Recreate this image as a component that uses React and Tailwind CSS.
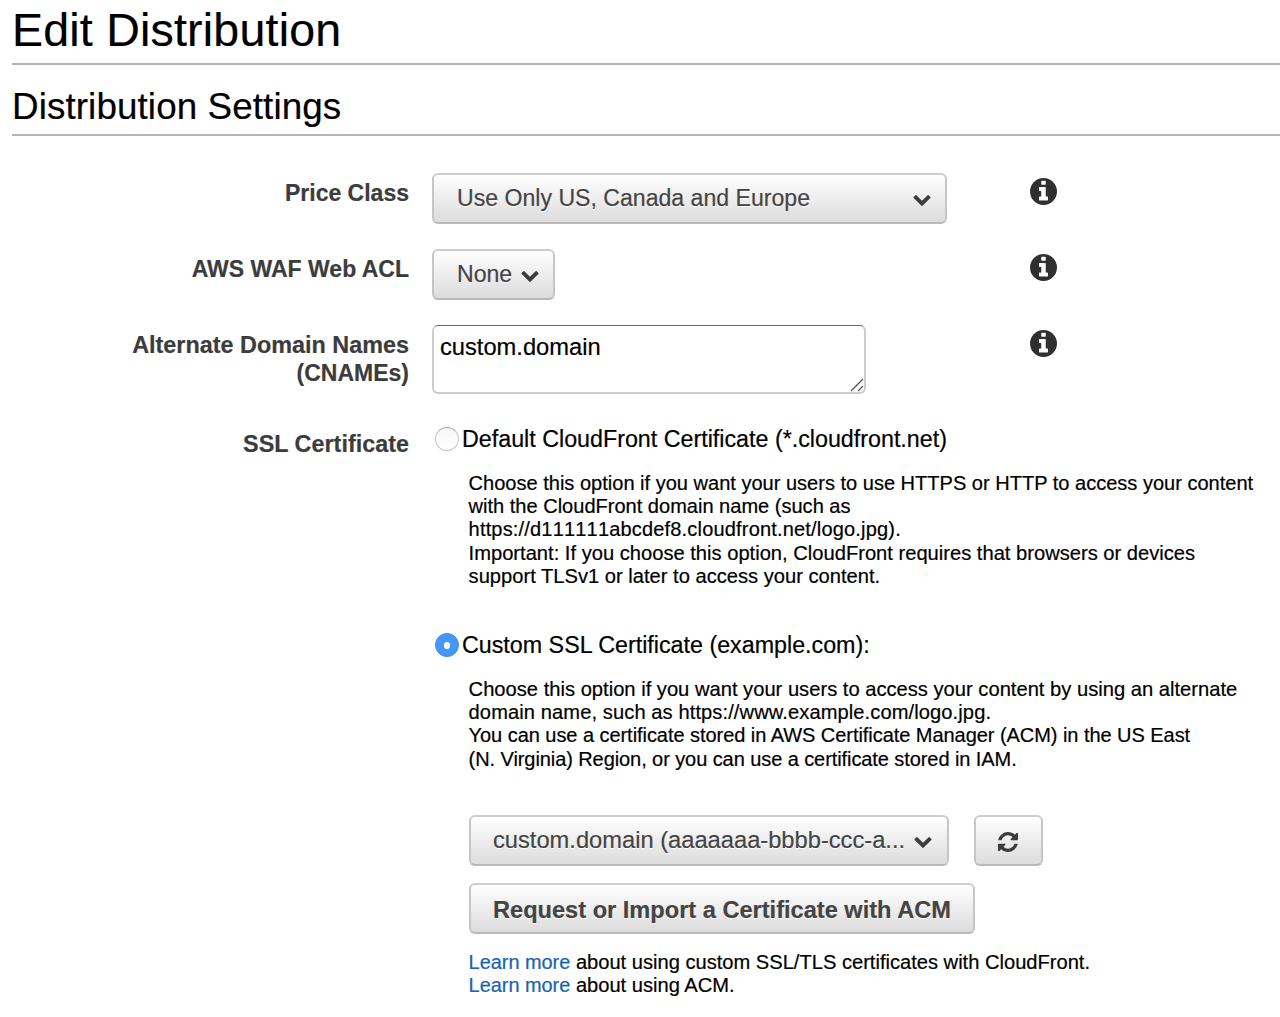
function Chevron({ className }) {
  return (
    <svg viewBox="90 533 1612 1035" className={`h-[11px] w-[18px] shrink-0 ${className}`} fill="#3c3c3c">
      <path d="M1683 808l-742 741q-19 19-45 19t-45-19L109 808q-19-19-19-45.5t19-45.5l166-165q19-19 45-19t45 19l531 531 531-531q19-19 45-19t45 19l166 165q19 19 19 45.5t-19 45.5z" />
    </svg>
  );
}

function Info() {
  return (
    <svg viewBox="128 128 1536 1536" className="mt-[5.5px] ml-auto mr-[223px] h-[27px] w-[27px] shrink-0" fill="#303030">
      <path fillRule="evenodd" d="M896 128a768 768 0 1 1 0 1536a768 768 0 1 1 0-1536zM1152 1376v-160q0-14-9-23t-23-9h-96V672q0-14-9-23t-23-9H672q-14 0-23 9t-9 23v160q0 14 9 23t23 9h96v320h-96q-14 0-23 9t-9 23v160q0 14 9 23t23 9h448q14 0 23-9t9-23zM1024 480V320q0-14-9-23t-23-9H800q-14 0-23 9t-9 23v160q0 14 9 23t23 9h192q14 0 23-9t9-23z" />
    </svg>
  );
}

function Refresh() {
  return (
    <svg viewBox="128 128 1536 1536" className="mt-[4px] mr-[2px] h-[20px] w-[20px]" fill="#3c3c3c">
      <path d="M1639 1056q0 5-1 7-64 268-268 434.5T892 1664q-146 0-282.5-55T366 1452l-129 129q-19 19-45 19t-45-19-19-45v-448q0-26 19-45t45-19h448q26 0 45 19t19 45-19 45l-137 137q71 66 161 102t187 36q134 0 250-65t186-179q11-17 53-117 8-23 30-23h192q13 0 22.5 9.5t9.5 22.5zm25-800v448q0 26-19 45t-45 19h-448q-26 0-45-19t-19-45 19-45l138-138Q1097 384 896 384q-134 0-250 65T460 628q-11 17-53 117-8 23-30 23H178q-13 0-22.5-9.5T146 736v-7q65-268 270-434.5T896 128q146 0 284 55.5T1425 340l130-129q19-19 45-19t45 19 19 45z" />
    </svg>
  );
}

function Button({ className, children }) {
  return (
    <button
      type="button"
      className={`flex h-[51px] items-center rounded-[6px] border-2 border-t-[#cdcdcd] border-x-[#c6c6c6] border-b-[#b9b9b9] bg-linear-to-b from-white to-[#dcdcdc] leading-[28px] whitespace-nowrap text-[#444] [text-shadow:0_1px_0_#fff] ${className}`}
    >
      {children}
    </button>
  );
}

function Row({ className, label, children }) {
  return (
    <div className={`flex items-start ${className}`}>
      <div className="mr-[23px] w-[409px] shrink-0 pt-[7px] text-right text-[23px] leading-[28px] font-bold whitespace-nowrap text-[#3c3c3c]">
        {label}
      </div>
      {children}
    </div>
  );
}

function Radio({ checked, children }) {
  return (
    <label className="flex h-[28px] items-center">
      <span
        className={
          checked
            ? "ml-[3px] flex h-6 w-6 items-center justify-center rounded-full border border-[#3b8df0] bg-[#4598f7]"
            : "ml-[3px] h-6 w-6 rounded-full border border-[#c6c6c6] border-t-[#a8a8a8] bg-linear-to-b from-[#f6f6f6] to-white"
        }
      >
        {checked && <span className="h-[7px] w-[6px] rounded-full bg-white" />}
      </span>
      <span className="ml-[3px] text-[23.27px] leading-[28px] whitespace-nowrap">{children}</span>
    </label>
  );
}

export default function App() {
  return (
    <div className="h-[1017px] w-[1280px] overflow-hidden bg-white font-['Liberation_Sans',Arial,sans-serif] text-black [-webkit-text-stroke-width:0.2px]">
      <h1 className="ml-3 h-[65px] border-b-2 border-[#b4b4b4] pt-[4px] text-[46.5px] leading-[52px] tracking-[0.22px]">
        Edit Distribution
      </h1>
      <h2 className="ml-3 h-[71px] border-b-2 border-[#b4b4b4] pt-[22px] text-[36.8px] leading-[40px] tracking-[0.1px]">
        Distribution Settings
      </h2>

      <Row className="mt-[36px] h-[76px]" label="Price Class">
        <Button className="mt-px w-[515px] pr-[14px] pl-[23px] text-[23.1px]">
          <span className="-mt-[2px]">Use Only US, Canada and Europe</span>
          <Chevron className="mt-[4px] ml-auto" />
        </Button>
        <Info />
      </Row>
      <Row className="h-[76px]" label="AWS WAF Web ACL">
        <Button className="mt-px w-[123px] pl-[23px] text-[23.1px]">
          <span className="-mt-[2px]">None</span>
          <Chevron className="mt-[4px] ml-[9px]" />
        </Button>
        <Info />
      </Row>
      <Row
        className="h-[100px]"
        label={
          <>
            <div className="text-[23.4px]">Alternate Domain Names</div>
            <div>(CNAMEs)</div>
          </>
        }
      >
        <div className="relative mt-px h-[69px] w-[434px] rounded-[6px] border-2 border-t border-[#cdcdcd] border-t-[#666] bg-white pt-[7px] pl-[6px] text-[23.7px] leading-[28px]">
          custom.domain
          <svg viewBox="0 0 14 14" className="absolute right-0 bottom-0 h-[14px] w-[14px]" fill="none" stroke="#555" strokeWidth="1.3">
            <path d="M1 13 13 1M8 13 13 8" />
          </svg>
        </div>
        <Info />
      </Row>
      <Row label={<div className="-mt-px text-[23.4px]">SSL Certificate</div>}>
        <div className="pt-px">
          <Radio>Default CloudFront Certificate (*.cloudfront.net)</Radio>
          <div className="mt-[19px] ml-[36.6px] text-[20px] leading-[23.2px] whitespace-nowrap">
            <p className="text-[20.05px]">Choose this option if you want your users to use HTTPS or HTTP to access your content</p>
            <p className="text-[20.05px]">with the CloudFront domain name (such as</p>
            <p className="tracking-[0.18px] [font-kerning:none]">https://d111111abcdef8.cloudfront.net/logo.jpg).</p>
            <p className="text-[20.15px]">Important: If you choose this option, CloudFront requires that browsers or devices</p>
            <p className="text-[20.15px]">support TLSv1 or later to access your content.</p>
          </div>
          <div className="h-[43px]" />
          <Radio checked>Custom SSL Certificate (example.com):</Radio>
          <div className="mt-[19px] ml-[36.6px] text-[20px] leading-[23.2px] whitespace-nowrap">
            <p className="text-[20.16px]">Choose this option if you want your users to access your content by using an alternate</p>
            <p className="text-[20.1px] tracking-[0.1px]">domain name, such as https://www.example.com/logo.jpg.</p>
            <p className="tracking-[-0.05px]">You can use a certificate stored in AWS Certificate Manager (ACM) in the US East</p>
            <p className="tracking-[-0.08px]">(N. Virginia) Region, or you can use a certificate stored in IAM.</p>
          </div>
          <div className="mt-[44px] ml-[37px] flex gap-[25px]">
            <Button className="w-[480px] pr-[15px] pl-[22px] text-[23.7px]">
              <span>custom.domain (aaaaaaa-bbbb-ccc-a...</span>
              <Chevron className="mt-[5px] ml-auto" />
            </Button>
            <Button className="w-[69px] justify-center">
              <Refresh />
            </Button>
          </div>
          <Button className="mt-[17px] ml-[37px] w-[506px] pt-[3px] pl-[22px] text-[23.6px] font-bold">
            Request or Import a Certificate with ACM
          </Button>
          <div className="mt-[17px] ml-[36.6px] text-[20px] leading-[23.2px] whitespace-nowrap">
            <p>
              <a href="#custom-ssl" className="text-[19.9px] text-[#1564b4]">Learn more</a>{" "}
              <span className="text-[20.13px]">about using custom SSL/TLS certificates with CloudFront.</span>
            </p>
            <p>
              <a href="#acm" className="text-[19.9px] text-[#1564b4]">Learn more</a>{" "}
              <span className="text-[20.13px]">about using ACM.</span>
            </p>
          </div>
        </div>
      </Row>
    </div>
  );
}
